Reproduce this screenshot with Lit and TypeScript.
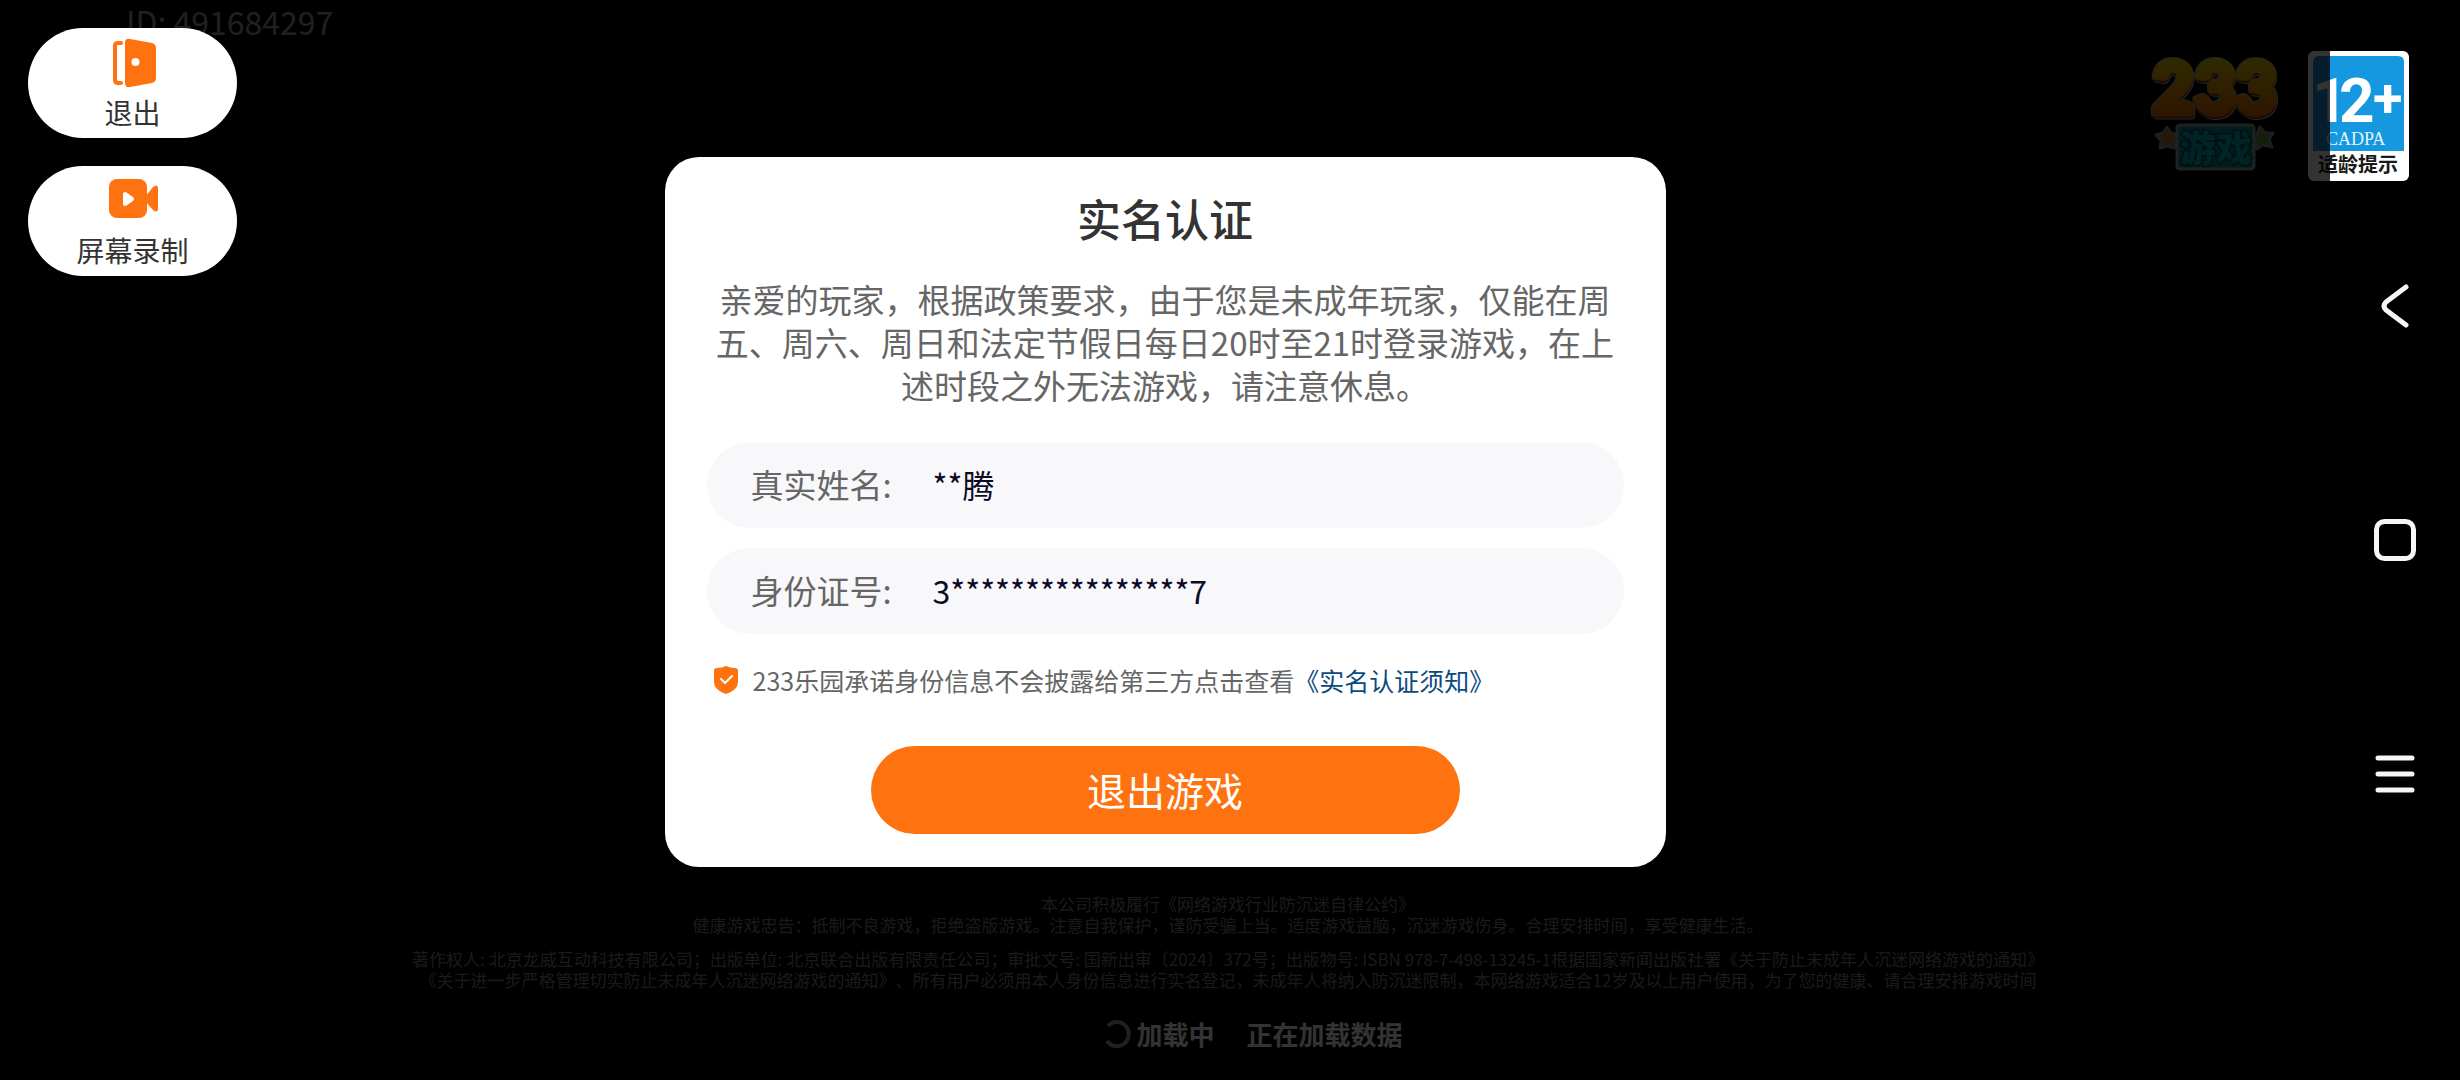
import { LitElement, html, css, svg } from "lit";
import { customElement, property } from "lit/decorators.js";

const FONT = css`"Noto Sans CJK SC", "Noto Sans", sans-serif`;

const exitIcon = svg`
  <path d="M15 5H12Q9 5 9 8V42Q9 45 12 45H15" fill="none" stroke="#ff7210" stroke-width="4" stroke-linecap="round"/>
  <path fill-rule="evenodd" fill="#ff7210" d="M24 1L46 5Q50 6 50 10V40Q50 44 46 45L24 49Q19 50 19 45V5Q19 0 24 1ZM29.500 20A4 4 0 1 0 29.500 28A4 4 0 1 0 29.500 20Z"/>`;

const recordIcon = svg`
  <rect x="3" y="3" width="38" height="39" rx="8" fill="#ff7210"/>
  <path d="M39 21L47 11Q52 7 52 13V32Q52 38 47 34L39 25Z" fill="#ff7210"/>
  <path d="M19 18V28L26 23Z" fill="#fff" stroke="#fff" stroke-width="4" stroke-linejoin="round"/>`;

@customElement("float-button")
export class FloatButton extends LitElement {
  @property() label = "";
  @property() icon = "exit";

  static styles = css`
    :host { display: block; }
    .pill {
      display: flex; flex-direction: column; align-items: center; gap: 7px;
      width: 209px; padding: 10px 0 9px; border: 0; border-radius: 55px;
      background: #fff; color: #333; font: 400 28px/34px ${FONT}; cursor: pointer;
    }
    .glyph { display: block; width: 54px; height: 50px; }
  `;

  render() {
    return html`<button class="pill" type="button">
      <svg class="glyph" viewBox="0 0 54 50" aria-hidden="true">${this.icon === "exit" ? exitIcon : recordIcon}</svg>
      <span>${this.label}</span>
    </button>`;
  }
}

@customElement("game-screen")
export class GameScreen extends LitElement {
  static styles = css`
    :host {
      display: flex; flex-direction: column; justify-content: space-between;
      color: #828282; font-family: ${FONT};
    }
    .top { display: flex; justify-content: space-between; align-items: flex-start; }
    .uid { margin: 0; padding: 3px 0 0 126px; font-size: 32px; line-height: 36px; color: #a0a0a0; }
    .brands { display: flex; gap: 24px; padding: 51px 51px 0 0; }
    .logo { width: 136px; height: 124px; overflow: visible; }
    .badge { width: 101px; height: 130px; }
    .digits {
      font: 900 70px Lato, sans-serif; fill: url(#gold); stroke: url(#gold); stroke-width: 7px;
      filter: drop-shadow(0 2px 0 #8a3c00) drop-shadow(1px 1px 0 #aaa) drop-shadow(-1px -1px 0 #aaa);
    }
    .sub {
      font: 900 36px ${FONT}; fill: #00b0bc; stroke: #004a5c; stroke-width: 3px; paint-order: stroke;
    }
    .age { font: 700 62px Roboto, "Liberation Sans", sans-serif; }
    .plus { font-size: 54px; }
    .cadpa { font: 400 18px "Liberation Serif", serif; }
    .hint { font: 700 20px ${FONT}; }
    .bottom { display: flex; flex-direction: column; align-items: center; padding-bottom: 28px; }
    .legal {
      margin: 0 0 13px; font-size: 17px; line-height: 21px; text-align: center;
      text-spacing-trim: space-all; padding-right: 4px;
    }
    .loading {
      display: flex; align-items: center; margin-top: 13px; padding-left: 46px;
      font-size: 26px; line-height: 36px; font-weight: 700; color: #fff;
    }
    .spinner { width: 28px; height: 28px; margin-right: 5px; }
    .status { margin-left: 32px; }
  `;

  render() {
    return html`
      <header class="top">
        <p class="uid">ID: 491684297</p>
        <div class="brands">
          <svg class="logo" viewBox="0 0 136 124" role="img" aria-label="233游戏">
            <defs>
              <linearGradient id="gold" gradientUnits="userSpaceOnUse" x1="0" y1="10" x2="0" y2="70">
                <stop offset="0" stop-color="#f0cc00"/>
                <stop offset="0.500" stop-color="#e89800"/>
                <stop offset="1" stop-color="#e06208"/>
              </linearGradient>
            </defs>
            <g stroke-linejoin="round">
              <path d="M19 76L23 82L31 84L26 90L27 97L19 95L12 97L13 90L8 84L15 82Z" fill="#b87818" stroke="#909090" stroke-width="3"/>
              <path d="M112 76L117 82L125 82L121 89L124 96L115 94L109 98L107 90L102 85L109 83Z" fill="#5f9428" stroke="#909090" stroke-width="3"/>
              <rect x="29" y="74" width="77" height="44" rx="3" fill="#008c98" stroke="#a0a0a0" stroke-width="3"/>
              <text class="sub" x="32" y="111">游戏</text>
              <text class="digits" x="5 47 88" y="62">233</text>
            </g>
          </svg>
          <svg class="badge" viewBox="0 0 101 130" role="img" aria-label="12+ CADPA 适龄提示">
            <rect width="101" height="130" rx="6" fill="#fff"/>
            <path d="M5 100V11Q5 5 11 5H90Q96 5 96 11V100Z" fill="#1598e0"/>
            <text class="age" x="4 31" y="71" fill="#fff">12<tspan class="plus" x="65" y="66">+</tspan></text>
            <text class="cadpa" x="18" y="94" fill="#e4f4ff">CADPA</text>
            <text class="hint" x="10" y="121" fill="#1a1a1a">适龄提示</text>
          </svg>
        </div>
      </header>
      <footer class="bottom">
        <p class="legal">本公司积极履行《网络游戏行业防沉迷自律公约》<br>健康游戏忠告：抵制不良游戏，拒绝盗版游戏。注意自我保护，谨防受骗上当。适度游戏益脑，沉迷游戏伤身。合理安排时间，享受健康生活。</p>
        <p class="legal">著作权人: 北京龙威互动科技有限公司；出版单位: 北京联合出版有限责任公司；审批文号: 国新出审〔2024〕372号；出版物号: ISBN 978-7-498-13245-1根据国家新闻出版社署《关于防止未成年人沉迷网络游戏的通知》<br>《关于进一步严格管理切实防止未成年人沉迷网络游戏的通知》、所有用户必须用本人身份信息进行实名登记，未成年人将纳入防沉迷限制，本网络游戏适合12岁及以上用户使用，为了您的健康、请合理安排游戏时间</p>
        <div class="loading">
          <svg class="spinner" viewBox="0 0 28 28" aria-hidden="true">
            <path d="M5 6A12 12 0 1 1 4 21" fill="none" stroke="#a0a0a0" stroke-width="4"/>
          </svg>
          <span>加载中</span>
          <span class="status">正在加载数据</span>
        </div>
      </footer>`;
  }
}

@customElement("verify-dialog")
export class VerifyDialog extends LitElement {
  static styles = css`
    :host { display: block; width: 100%; max-width: 1001px; font-family: ${FONT}; }
    .card {
      display: flex; flex-direction: column; box-sizing: border-box;
      padding: 33px 42px 33px; border-radius: 34px; background: #fff;
    }
    .title { margin: 0; text-align: center; font-size: 44px; line-height: 56px; font-weight: 500; color: #333; }
    .message {
      margin: 32px 0 35px; text-align: center; font-size: 33px; line-height: 43px; color: #666;
      text-spacing-trim: space-all;
    }
    .fields { display: flex; flex-direction: column; gap: 20px; }
    .field {
      display: flex; align-items: center; height: 86px; padding: 0 44px; box-sizing: border-box;
      border-radius: 43px; background: #f8f7f9;
    }
    .name { width: 182px; padding-bottom: 2px; font-size: 33px; line-height: 44px; color: #666; }
    .value {
      flex: 1; min-width: 0; padding: 0 0 2px; border: 0; outline: 0; background: none;
      color: #0b0b26; font: 400 32px/44px ${FONT};
    }
    .notice {
      display: flex; align-items: center; margin: 28px 0 48px; padding-left: 6px;
      font-size: 25px; line-height: 36px; color: #666; text-spacing-trim: space-all;
    }
    .shield { width: 26px; height: 30px; margin-right: 14px; }
    .rules { color: #0b4a80; text-decoration: none; }
    .leave {
      align-self: center; width: 589px; max-width: 100%; height: 88px; padding: 0 0 3px;
      border: 0; border-radius: 44px; background: #ff7210; color: #fff;
      font: 400 39px/56px ${FONT}; cursor: pointer;
    }
  `;

  render() {
    return html`
      <section class="card" role="dialog" aria-labelledby="title">
        <h1 class="title" id="title">实名认证</h1>
        <p class="message">亲爱的玩家，根据政策要求，由于您是未成年玩家，仅能在周五、周六、周日和法定节假日每日20时至21时登录游戏，在上述时段之外无法游戏，请注意休息。</p>
        <div class="fields">
          <div class="field">
            <label class="name" for="real-name">真实姓名:</label>
            <input class="value" id="real-name" type="text" readonly .value=${"**腾"}>
          </div>
          <div class="field">
            <label class="name" for="id-number">身份证号:</label>
            <input class="value" id="id-number" type="text" readonly .value=${"3****************7"}>
          </div>
        </div>
        <div class="notice">
          <svg class="shield" viewBox="0 0 26 30" aria-hidden="true">
            <path d="M4 3Q9 3 13 1Q17 3 22 3Q25 3 25 6V17Q25 25 13 29Q1 25 1 17V6Q1 3 4 3Z" fill="#ff7210"/>
            <path d="M8 14L12 18L19 11" fill="none" stroke="#fff" stroke-width="2" stroke-linecap="round" stroke-linejoin="round"/>
          </svg>
          <span>233乐园承诺身份信息不会披露给第三方点击查看</span><a class="rules" href="#rules">《实名认证须知》</a>
        </div>
        <button class="leave" type="button">退出游戏</button>
      </section>`;
  }
}

@customElement("app-root")
export class AppRoot extends LitElement {
  static styles = css`
    :host { display: block; background: #000; }
    .screen { display: grid; grid-template-columns: minmax(0, 1fr) 130px; min-height: 100vh; }
    .game { grid-area: 1 / 1 / 2 / 3; }
    .mask {
      grid-area: 1 / 1; z-index: 1; display: flex; align-items: center; justify-content: center;
      box-sizing: border-box; padding-bottom: 56px; background: rgba(0, 0, 0, 0.8);
    }
    .tools {
      grid-area: 1 / 1; z-index: 2; justify-self: start; align-self: start;
      display: flex; flex-direction: column; gap: 28px; padding: 28px;
    }
    .nav {
      grid-area: 1 / 2; z-index: 1; display: flex; flex-direction: column;
      align-items: center; justify-content: center; gap: 186px;
    }
    .key { display: block; width: 48px; height: 48px; padding: 0; border: 0; background: none; cursor: pointer; }
    .sign { display: block; width: 48px; height: 48px; fill: none; stroke: #f7f5f8; stroke-linecap: round; stroke-linejoin: round; }
  `;

  render() {
    return html`
      <main class="screen">
        <game-screen class="game"></game-screen>
        <div class="mask"><verify-dialog></verify-dialog></div>
        <div class="tools">
          <float-button icon="exit" label="退出"></float-button>
          <float-button icon="record" label="屏幕录制"></float-button>
        </div>
        <nav class="nav">
          <button class="key" type="button" aria-label="返回">
            <svg class="sign" viewBox="0 0 48 48"><path d="M35 5L15 20Q11 24 15 28L35 43" stroke-width="5"/></svg>
          </button>
          <button class="key" type="button" aria-label="主页">
            <svg class="sign" viewBox="0 0 48 48"><rect x="5.500" y="5.500" width="37" height="37" rx="8" stroke-width="5"/></svg>
          </button>
          <button class="key" type="button" aria-label="菜单">
            <svg class="sign" viewBox="0 0 48 48"><path d="M7 8H41M7 24H41M7 40H41" stroke-width="5"/></svg>
          </button>
        </nav>
      </main>`;
  }
}
